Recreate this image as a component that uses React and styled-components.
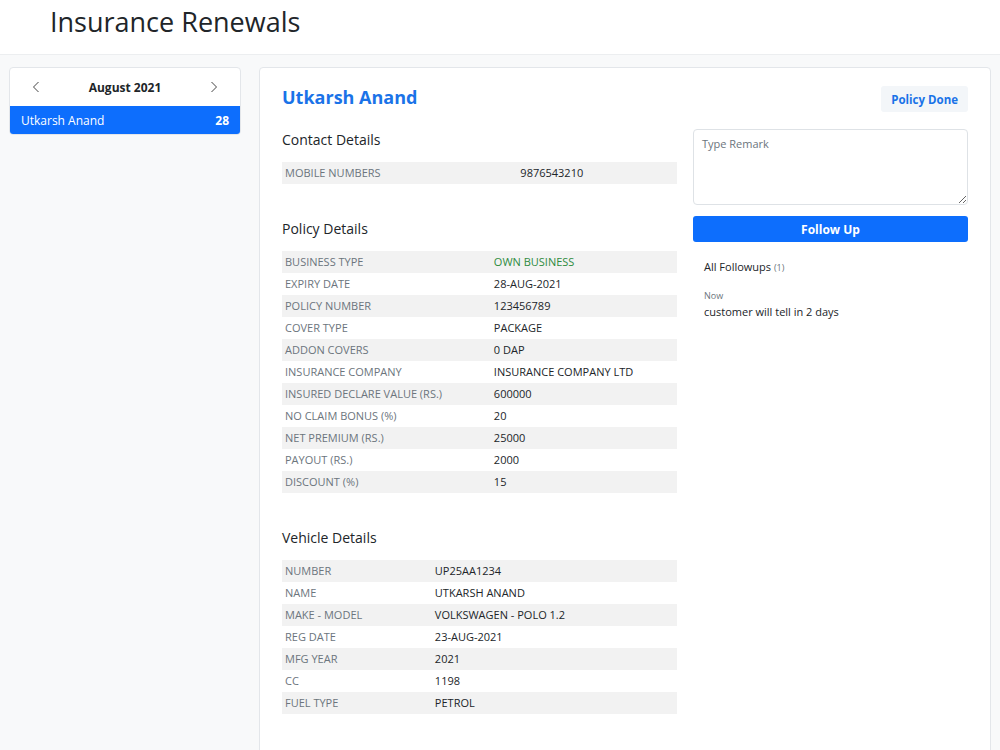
import styled, { createGlobalStyle } from "styled-components";

const GlobalStyle = createGlobalStyle`
  body {
    margin: 0;
    background-color: #f8f9fa;
    font-family: "Open Sans", "Noto Sans", sans-serif;
    color: #212529;
  }
`;

const Header = styled.header`
  height: 55px;
  background-color: #fff;
  border-bottom: 1px solid #eceef0;
  display: flex;
  align-items: center;
  padding-left: 50px;
  box-sizing: border-box;
`;

const PageTitle = styled.h1`
  margin: 0;
  font-size: 27px;
  font-weight: 400;
  color: #212529;
  transform: translateY(-6px);
`;

const Body = styled.div`
  display: grid;
  grid-template-columns: 232px 1fr;
  gap: 18px;
  padding: 12px 9px 0 9px;
  align-items: start;
`;

const ListCard = styled.div`
  background-color: #fff;
  border: 1px solid #e3e6ea;
  border-radius: 4px;
  overflow: hidden;
`;

const MonthBar = styled.div`
  height: 38px;
  display: flex;
  align-items: center;
  justify-content: space-between;
  padding: 0 20px;
`;

const MonthLabel = styled.span`
  font-size: 12px;
  font-weight: 700;
`;

const ArrowButton = styled.button`
  border: none;
  background: none;
  padding: 0;
  width: 12px;
  height: 12px;
  display: flex;
  align-items: center;
  justify-content: center;
  cursor: pointer;
`;

const ListItem = styled.div`
  height: 28px;
  display: flex;
  align-items: center;
  justify-content: space-between;
  padding: 0 11px;
  font-size: 12px;
  background-color: ${(props) => (props.active ? "#0d6efd" : "#fff")};
  color: ${(props) => (props.active ? "#fff" : "#212529")};
`;

const Count = styled.span`
  font-weight: 700;
`;

const DetailCard = styled.div`
  background-color: #fff;
  border: 1px solid #e3e6ea;
  border-radius: 4px;
  padding: 15px 22px 60px 22px;
  min-height: 700px;
`;

const TopRow = styled.div`
  display: flex;
  justify-content: space-between;
  align-items: flex-start;
`;

const CustomerName = styled.h2`
  margin: 0;
  font-size: 18px;
  font-weight: 700;
  color: #1a73e8;
  line-height: 28px;
`;

const DoneButton = styled.button`
  margin-top: 3px;
  border: none;
  background-color: #f3f6f9;
  color: #1a73e8;
  font-family: inherit;
  font-size: 11.5px;
  font-weight: 700;
  padding: 0 10px;
  height: 26px;
  border-radius: 3px;
  cursor: pointer;
`;

const Columns = styled.div`
  display: grid;
  grid-template-columns: 395px 1fr;
  gap: 16px;
  margin-top: 11px;
`;

const Section = styled.div`
  margin-top: ${(props) => (props.first ? "0" : "28px")};
`;

const SectionTitle = styled.h3`
  margin: 0;
  font-size: 14px;
  font-weight: 400;
  line-height: 22px;
  padding: 6px 0 11px 0;
`;

const Table = styled.table`
  width: 100%;
  border-collapse: collapse;
  font-size: 11px;
`;

const Row = styled.tr`
  height: 22px;
  background-color: ${(props) => (props.striped ? "#f2f2f2" : "#fff")};
`;

const Key = styled.td`
  padding: 0 3px;
  line-height: 16px;
  color: #6c757d;
  white-space: nowrap;
`;

const Value = styled.td`
  padding: 0 3px;
  line-height: 16px;
  color: ${(props) => props.color || "#212529"};
  white-space: nowrap;
`;

const SidePanel = styled.div`
  display: flex;
  flex-direction: column;
  padding-top: 6px;
`;

const Remark = styled.textarea`
  height: 76px;
  box-sizing: border-box;
  border: 1px solid #dee2e6;
  border-radius: 4px;
  padding: 6px 8px;
  font-family: inherit;
  font-size: 11px;
  resize: vertical;
  &::placeholder {
    color: #6c757d;
  }
`;

const FollowButton = styled.button`
  margin-top: 11px;
  height: 26px;
  border: none;
  border-radius: 3px;
  background-color: #0d6efd;
  color: #fff;
  font-family: inherit;
  font-size: 12px;
  font-weight: 700;
  cursor: pointer;
`;

const Followups = styled.div`
  padding: 17px 11px;
`;

const FollowTitle = styled.div`
  font-size: 11px;
  line-height: 16px;
`;

const Muted = styled.span`
  font-size: 9px;
  color: #6c757d;
`;

const FollowEntry = styled.div`
  margin-top: 14px;
`;

const FollowTime = styled.div`
  font-size: 9px;
  color: #6c757d;
  line-height: 12px;
`;

const FollowText = styled.div`
  font-size: 11px;
  line-height: 20px;
`;

const Chevron = ({ dir }) => (
  <svg width="8" height="12" viewBox="0 0 8 12" fill="none">
    <polyline
      points={dir === "left" ? "6.5,1 1.5,6 6.5,11" : "1.5,1 6.5,6 1.5,11"}
      stroke="#444"
      strokeWidth="1"
    />
  </svg>
);

const contact = [["MOBILE NUMBERS", "9876543210"]];

const policy = [
  ["BUSINESS TYPE", "OWN BUSINESS", "#2e8b3e"],
  ["EXPIRY DATE", "28-AUG-2021"],
  ["POLICY NUMBER", "123456789"],
  ["COVER TYPE", "PACKAGE"],
  ["ADDON COVERS", "0 DAP"],
  ["INSURANCE COMPANY", "INSURANCE COMPANY LTD"],
  ["INSURED DECLARE VALUE (RS.)", "600000"],
  ["NO CLAIM BONUS (%)", "20"],
  ["NET PREMIUM (RS.)", "25000"],
  ["PAYOUT (RS.)", "2000"],
  ["DISCOUNT (%)", "15"],
];

const vehicle = [
  ["NUMBER", "UP25AA1234"],
  ["NAME", "UTKARSH ANAND"],
  ["MAKE - MODEL", "VOLKSWAGEN - POLO 1.2"],
  ["REG DATE", "23-AUG-2021"],
  ["MFG YEAR", "2021"],
  ["CC", "1198"],
  ["FUEL TYPE", "PETROL"],
];

const DetailTable = ({ rows }) => (
  <Table>
    <tbody>
      {rows.map(([k, v, c], i) => (
        <Row key={k} striped={i % 2 === 0}>
          <Key>{k}</Key>
          <Value color={c}>{v}</Value>
        </Row>
      ))}
    </tbody>
  </Table>
);

const App = () => {
  return (
    <>
      <GlobalStyle />
      <Header>
        <PageTitle>Insurance Renewals</PageTitle>
      </Header>
      <Body>
        <ListCard>
          <MonthBar>
            <ArrowButton>
              <Chevron dir="left" />
            </ArrowButton>
            <MonthLabel>August 2021</MonthLabel>
            <ArrowButton>
              <Chevron dir="right" />
            </ArrowButton>
          </MonthBar>
          <ListItem active>
            <span>Utkarsh Anand</span>
            <Count>28</Count>
          </ListItem>
        </ListCard>

        <DetailCard>
          <TopRow>
            <CustomerName>Utkarsh Anand</CustomerName>
            <DoneButton>Policy Done</DoneButton>
          </TopRow>
          <Columns>
            <div>
              <Section first>
                <SectionTitle>Contact Details</SectionTitle>
                <DetailTable rows={contact} />
              </Section>
              <Section>
                <SectionTitle>Policy Details</SectionTitle>
                <DetailTable rows={policy} />
              </Section>
              <Section>
                <SectionTitle>Vehicle Details</SectionTitle>
                <DetailTable rows={vehicle} />
              </Section>
            </div>
            <SidePanel>
              <Remark placeholder="Type Remark" />
              <FollowButton>Follow Up</FollowButton>
              <Followups>
                <FollowTitle>
                  All Followups <Muted>(1)</Muted>
                </FollowTitle>
                <FollowEntry>
                  <FollowTime>Now</FollowTime>
                  <FollowText>customer will tell in 2 days</FollowText>
                </FollowEntry>
              </Followups>
            </SidePanel>
          </Columns>
        </DetailCard>
      </Body>
    </>
  );
};

export default App;
